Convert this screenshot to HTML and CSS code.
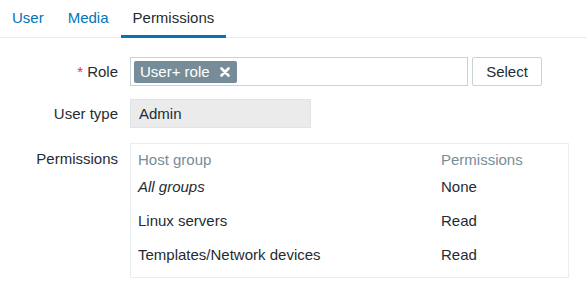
FILE: index.html
```html
<!DOCTYPE html>
<html lang="en">
  <head>
    <meta charset="UTF-8" />
    <title>User - Permissions</title>
    <link rel="stylesheet" href="styles.css">
  </head>
  <body>
    <div class="tabs">
      <a class="tab" href="#">User</a>
      <a class="tab" href="#">Media</a>
      <a class="tab active" href="#">Permissions</a>
    </div>

    <div class="form">
      <div class="row">
        <label class="label"><span class="required">*</span> Role</label>
        <div class="field role-field">
          <div class="multiselect">
            <span class="tag">
              User+ role
              <svg class="tag-remove" width="10" height="10" viewBox="0 0 10 10">
                <path d="M1.5 1.5 L8.5 8.5 M8.5 1.5 L1.5 8.5" stroke="#fff" stroke-width="2.6" stroke-linecap="round" />
              </svg>
            </span>
          </div>
          <button class="btn">Select</button>
        </div>
      </div>

      <div class="row">
        <label class="label">User type</label>
        <div class="field">
          <div class="readonly">Admin</div>
        </div>
      </div>

      <div class="row row-table">
        <label class="label label-top">Permissions</label>
        <div class="field">
          <div class="perm-table">
            <div class="th">Host group</div>
            <div class="th">Permissions</div>
            <div class="td"><i>All groups</i></div>
            <div class="td">None</div>
            <div class="td">Linux servers</div>
            <div class="td">Read</div>
            <div class="td">Templates/Network devices</div>
            <div class="td">Read</div>
          </div>
        </div>
      </div>
    </div>
  </body>
</html>
```

FILE: styles.css
```css
body {
  margin: 0;
  padding: 0;
  background-color: #fff;
  color: #1f2c33;
  font-family: "Liberation Sans", Arial, sans-serif;
  font-size: 15px;
}

.tabs {
  display: flex;
  border-bottom: 1px solid #ebebeb;
  height: 37px;
}

.tab {
  display: block;
  box-sizing: border-box;
  height: 38px;
  padding: 0 12px;
  line-height: 35px;
  color: #0275b8;
  text-decoration: none;
  border-bottom: 3px solid transparent;
}

.tab.active {
  color: #1f2c33;
  border-bottom-color: #0275b8;
}

.form {
  padding-top: 19px;
}

.row {
  display: grid;
  grid-template-columns: 118px 1fr;
  column-gap: 12px;
  align-items: center;
  margin-bottom: 13px;
}

.row-table {
  margin-top: 15px;
  align-items: start;
}

.label {
  text-align: right;
}

.label-top {
  padding-top: 8px;
  line-height: 16px;
}

.required {
  color: #e33734;
}

.field {
  display: flex;
  align-items: center;
}

.role-field {
  gap: 4px;
}

.multiselect {
  box-sizing: border-box;
  width: 338px;
  height: 29px;
  border: 1px solid #c9d2d7;
  padding: 3px;
  display: flex;
  align-items: center;
}

.tag {
  display: flex;
  align-items: center;
  gap: 10px;
  height: 22px;
  padding: 0 7px 0 6px;
  background-color: #768d99;
  color: #fff;
  border-radius: 2px;
}

.tag-remove {
  display: block;
}

.btn {
  box-sizing: border-box;
  width: 70px;
  height: 29px;
  background-color: #fff;
  border: 1px solid #c9d2d7;
  border-radius: 2px;
  color: #1f2c33;
  font-family: "Liberation Sans", Arial, sans-serif;
  font-size: 15px;
}

.readonly {
  box-sizing: border-box;
  width: 181px;
  height: 29px;
  padding: 0 8px;
  line-height: 27px;
  background-color: #ebebeb;
  border: 1px solid #dfe4e7;
}

.perm-table {
  box-sizing: border-box;
  width: 439px;
  border: 1px solid #ebeef0;
  padding: 0 8px 5px 7px;
  display: grid;
  grid-template-columns: 1fr 119px;
}

.th {
  color: #768d99;
  padding-top: 6px;
  line-height: 20px;
}

.td {
  line-height: 34px;
}
```
